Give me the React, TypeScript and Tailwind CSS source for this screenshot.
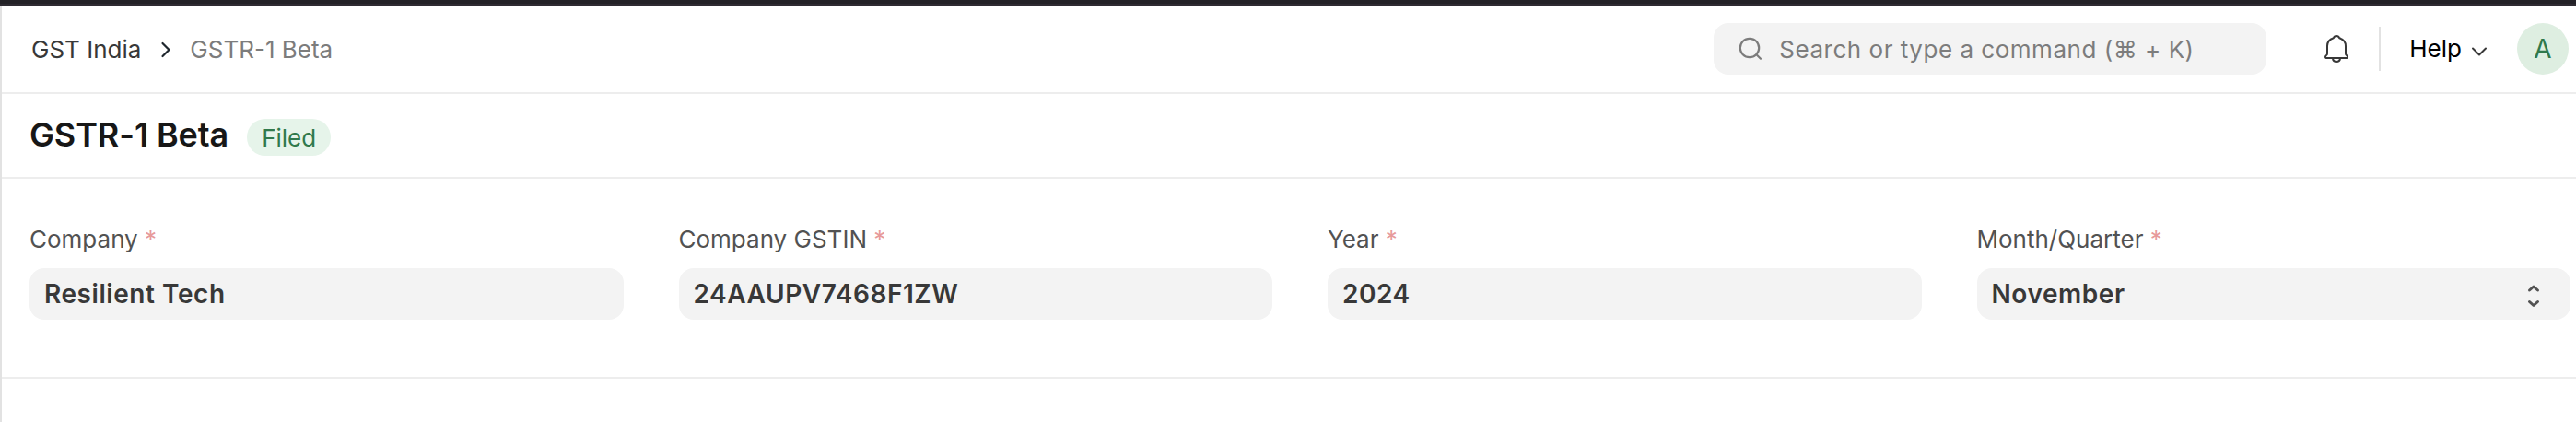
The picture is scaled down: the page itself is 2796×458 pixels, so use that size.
const fields = [
  { label: 'Company', value: 'Resilient Tech' },
  { label: 'Company GSTIN', value: '24AAUPV7468F1ZW' },
  { label: 'Year', value: '2024' },
  { label: 'Month/Quarter', value: 'November', select: true },
];

function Navbar() {
  return (
    <header className="flex h-24 items-center border-b-2 border-[#ededed] pr-2 pl-8">
      <nav className="flex items-center pt-0.5 text-[26px] leading-[30px]">
        <a className="text-[#383838]">GST India</a>
        <svg className="mr-5 ml-[21px] h-[18px] w-3" viewBox="0 0 12 18" fill="none" stroke="#1f272e" strokeWidth="2.2" strokeLinecap="round" strokeLinejoin="round">
          <path d="M2.5 2 9.5 9 2.5 16" />
        </svg>
        <span className="text-[#7c7c7c]">GSTR-1 Beta</span>
      </nav>
      <div className="ml-auto flex items-center">
        <div className="flex h-14 w-[600px] items-center rounded-2xl bg-[#f3f3f3] pl-[27px] text-[#7c7c7c]">
          <svg className="h-[26px] w-[26px]" viewBox="0 0 26 26" fill="none" stroke="currentColor" strokeWidth="2.2" strokeLinecap="round">
            <circle cx="12" cy="12" r="10.2" />
            <path d="m19.5 19.2 4.500 4.500" />
          </svg>
          <span className="ml-[18px] pt-0.5 text-[26px] leading-[30px] tracking-[0.02em]">Search or type a command (⌘ + K)</span>
        </div>
        <svg className="ml-[62px] h-8 w-7" viewBox="0 0 28 32" fill="none" stroke="#383838" strokeWidth="2" strokeLinejoin="round">
          <path d="M14 2c-1.700 0-2.800 1-3.200 2.300C6.600 5.600 4 9 4 13v8.300c0 .8-.3 1.300-.9 1.700-.7.500-1.100 1-1.100 1.700C2 25.600 2.800 26 3.700 26h20.600c.9 0 1.700-.4 1.700-1.300 0-.7-.4-1.200-1.100-1.700-.6-.4-.9-.9-.9-1.700V13c0-4-2.600-7.400-6.800-8.700C16.800 3 15.700 2 14 2Z" />
          <path d="M10 26.500c.3 2.300 1.900 3.500 4 3.500s3.700-1.200 4-3.500" />
        </svg>
        <div className="ml-8 h-12 w-0.5 bg-[#e2e2e2]" />
        <button className="ml-[31px] flex items-center text-[26px] leading-[30px] text-black">
          <span>Help</span>
          <svg className="mt-1.5 ml-2.5 h-3 w-[18px]" viewBox="0 0 18 12" fill="none" stroke="#383838" strokeWidth="2" strokeLinecap="round" strokeLinejoin="round">
            <path d="m2 2.500 7 7 7-7" />
          </svg>
        </button>
        <div className="ml-8 flex h-14 w-14 items-center justify-center rounded-full bg-[#deeee1] text-[28px] leading-none text-[#30794c]">A</div>
      </div>
    </header>
  );
}

function SelectIcon() {
  return (
    <svg className="mt-1 h-[26px] w-[14px]" viewBox="0 0 14 26" fill="none" stroke="#525252" strokeWidth="3" strokeLinecap="round" strokeLinejoin="round">
      <path d="M2.500 7 7 3 11.500 7" />
      <path d="m2.500 19.500 4.500 4 4.500-4" />
    </svg>
  );
}

export default function App() {
  return (
    <div className="h-[458px] w-full overflow-hidden bg-white font-['Inter',sans-serif]">
      <div className="h-1.5 border-b-2 border-[#2e2b32] bg-[#232227]" />
      <div className="h-[452px] border-l-2 border-[#e2e2e2]">
        <Navbar />
        <div className="flex h-[92px] items-center border-b-2 border-[#ededed] pl-[30px]">
          <h1 className="pb-[3px] text-4xl leading-[44px] font-semibold tracking-[-0.1px] text-[#171717]">GSTR-1 Beta</h1>
          <span className="mt-1 ml-5 flex h-10 items-center rounded-full bg-[#e6f4ea] px-4 pt-px text-[26px] leading-[30px] text-[#30794c]">Filed</span>
        </div>
        <main className="grid h-[217px] grid-cols-4 gap-[60px] border-b-2 border-[#ededed] pt-[50px] pr-1.5 pl-[30px]">
          {fields.map((f) => (
            <div key={f.label}>
              <label className="block text-[26px] leading-[32px] text-[#525252]">
                {f.label} <span className="text-[#e79a9a]">*</span>
              </label>
              <div className="mt-[15px] flex h-14 items-center justify-between rounded-2xl bg-[#f3f3f3] pr-[33px] pl-4 text-[28px] leading-[34px] font-semibold tracking-[0.02em] text-[#383838]">
                <span>{f.value}</span>
                {f.select && <SelectIcon />}
              </div>
            </div>
          ))}
        </main>
      </div>
    </div>
  );
}
